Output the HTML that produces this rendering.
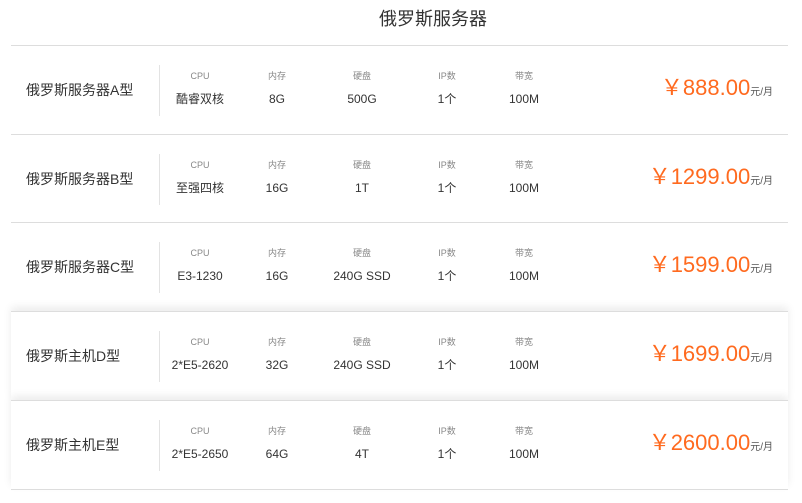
<!DOCTYPE html>
<html><head><meta charset="utf-8"><style>
body{margin:0;width:802px;height:503px;background:#fff;font-family:"Liberation Sans","Noto Sans CJK SC",sans-serif;color:#333;overflow:hidden;position:relative}
.title{position:absolute;left:0;width:866px;top:5px;text-align:center;font-size:18px;color:#333}
.row{position:absolute;left:11px;width:777px;height:88px;border-top:1px solid #ddd;background:#fff}
.row.sh{box-shadow:0 -4px 8px rgba(0,0,0,0.08)}
.name{position:absolute;left:15px;top:34px;font-size:14px;color:#333}
.div{position:absolute;left:148px;top:19px;width:1px;height:51px;background:#e3e3e3}
.c{position:absolute;text-align:center;width:90px;line-height:14px}
.l{top:23px;font-size:9px;color:#888}
.v{top:46px;font-size:12px;color:#333}
.p{position:absolute;right:15px;top:24px;color:#ff6a1f;font-size:22px;white-space:nowrap}
.p small{font-size:10px;color:#555}
.last{position:absolute;left:11px;width:777px;top:489px;border-top:1px solid #ddd}
</style></head><body>
<div class="title">俄罗斯服务器</div>
<div class="row" style="top:45px"><div class="name">俄罗斯服务器A型</div><div class="div"></div>
<div class="c l" style="left:144px">CPU</div><div class="c v" style="left:144px">酷睿双核</div>
<div class="c l" style="left:221px">内存</div><div class="c v" style="left:221px">8G</div>
<div class="c l" style="left:306px">硬盘</div><div class="c v" style="left:306px">500G</div>
<div class="c l" style="left:391px">IP数</div><div class="c v" style="left:391px">1个</div>
<div class="c l" style="left:468px">带宽</div><div class="c v" style="left:468px">100M</div>
<div class="p">￥888.00<small>元/月</small></div></div>
<div class="row" style="top:134px"><div class="name">俄罗斯服务器B型</div><div class="div"></div>
<div class="c l" style="left:144px">CPU</div><div class="c v" style="left:144px">至强四核</div>
<div class="c l" style="left:221px">内存</div><div class="c v" style="left:221px">16G</div>
<div class="c l" style="left:306px">硬盘</div><div class="c v" style="left:306px">1T</div>
<div class="c l" style="left:391px">IP数</div><div class="c v" style="left:391px">1个</div>
<div class="c l" style="left:468px">带宽</div><div class="c v" style="left:468px">100M</div>
<div class="p">￥1299.00<small>元/月</small></div></div>
<div class="row" style="top:222px"><div class="name">俄罗斯服务器C型</div><div class="div"></div>
<div class="c l" style="left:144px">CPU</div><div class="c v" style="left:144px">E3-1230</div>
<div class="c l" style="left:221px">内存</div><div class="c v" style="left:221px">16G</div>
<div class="c l" style="left:306px">硬盘</div><div class="c v" style="left:306px">240G SSD</div>
<div class="c l" style="left:391px">IP数</div><div class="c v" style="left:391px">1个</div>
<div class="c l" style="left:468px">带宽</div><div class="c v" style="left:468px">100M</div>
<div class="p">￥1599.00<small>元/月</small></div></div>
<div class="row sh" style="top:311px"><div class="name">俄罗斯主机D型</div><div class="div"></div>
<div class="c l" style="left:144px">CPU</div><div class="c v" style="left:144px">2*E5-2620</div>
<div class="c l" style="left:221px">内存</div><div class="c v" style="left:221px">32G</div>
<div class="c l" style="left:306px">硬盘</div><div class="c v" style="left:306px">240G SSD</div>
<div class="c l" style="left:391px">IP数</div><div class="c v" style="left:391px">1个</div>
<div class="c l" style="left:468px">带宽</div><div class="c v" style="left:468px">100M</div>
<div class="p">￥1699.00<small>元/月</small></div></div>
<div class="row sh" style="top:400px"><div class="name">俄罗斯主机E型</div><div class="div"></div>
<div class="c l" style="left:144px">CPU</div><div class="c v" style="left:144px">2*E5-2650</div>
<div class="c l" style="left:221px">内存</div><div class="c v" style="left:221px">64G</div>
<div class="c l" style="left:306px">硬盘</div><div class="c v" style="left:306px">4T</div>
<div class="c l" style="left:391px">IP数</div><div class="c v" style="left:391px">1个</div>
<div class="c l" style="left:468px">带宽</div><div class="c v" style="left:468px">100M</div>
<div class="p">￥2600.00<small>元/月</small></div></div>
<div class="last"></div>
</body></html>
